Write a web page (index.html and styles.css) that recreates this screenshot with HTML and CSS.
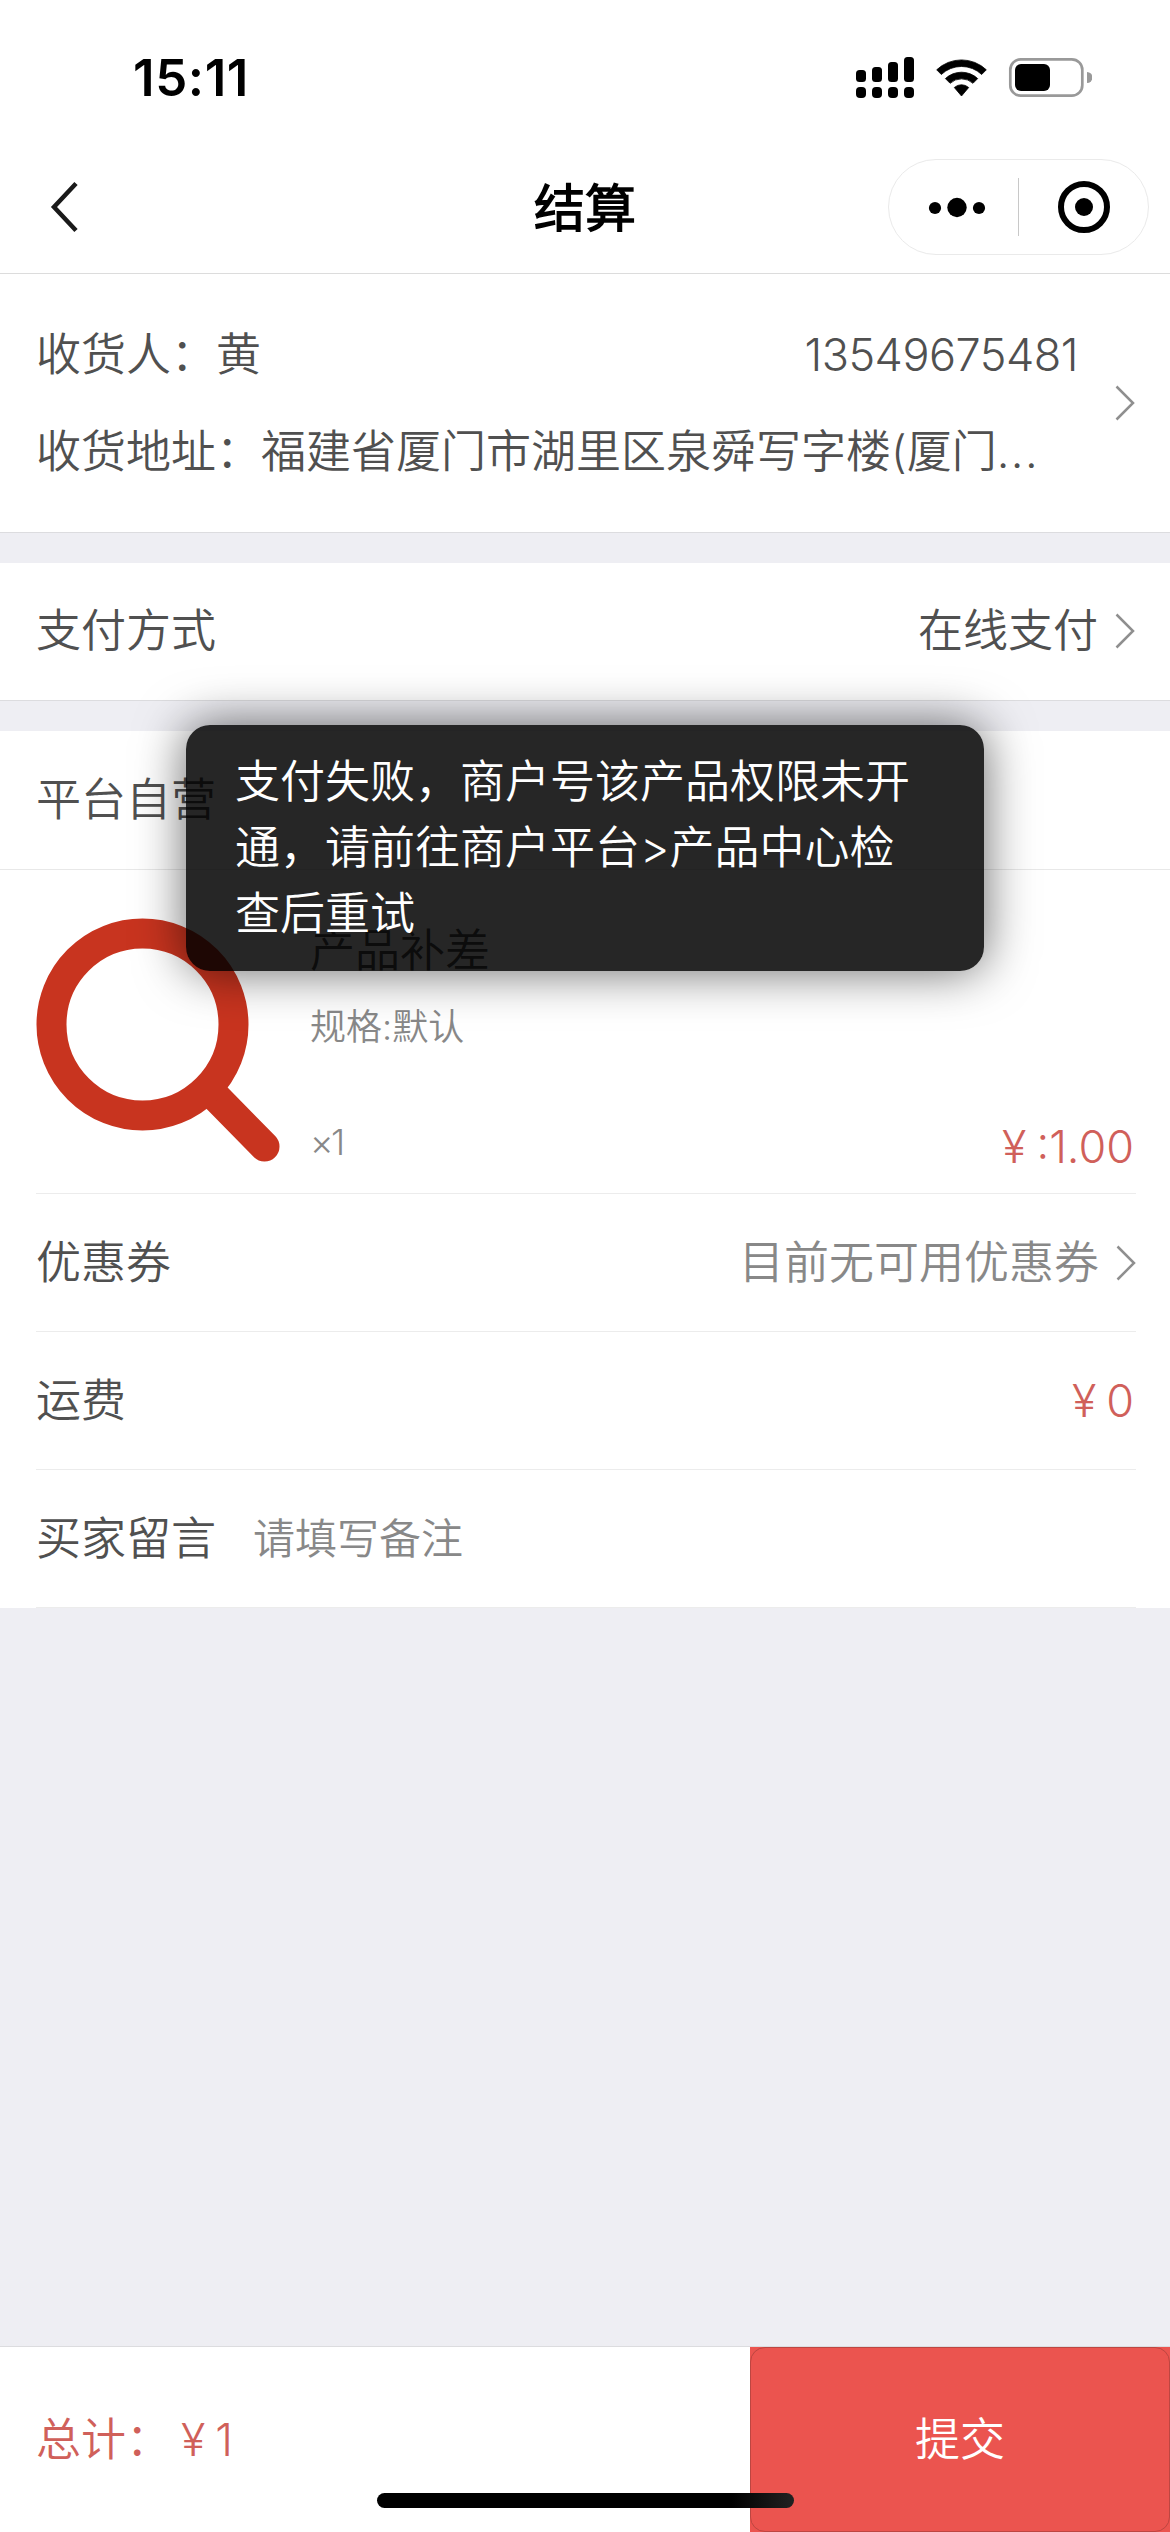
FILE: index.html
```html
<!DOCTYPE html>
<html lang="zh-CN">
<head>
<meta charset="utf-8">
<title>结算</title>
<link rel="stylesheet" href="styles.css">
</head>
<body>
<div class="page">
  <header class="top">
    <div class="status">
      <span class="clock">15:11</span>
      <svg class="status-icons" width="236" height="44" viewBox="0 0 236 44">
        <g>
          <rect x="0" y="15" width="10" height="12" rx="3.5"/>
          <rect x="16" y="12" width="10" height="15" rx="3.5"/>
          <rect x="32" y="7" width="10" height="20" rx="3.5"/>
          <rect x="48" y="2" width="10" height="25" rx="3.5"/>
          <rect x="0" y="32" width="10" height="11" rx="4"/>
          <rect x="16" y="32" width="10" height="11" rx="4"/>
          <rect x="32" y="32" width="10" height="11" rx="4"/>
          <rect x="48" y="32" width="10" height="11" rx="4"/>
        </g>
        <path d="M80.7 14.8a36 36 0 0 1 49.6 0l-4.6 4.7a29.4 29.4 0 0 0-40.4 0z M89.4 23.6a23.6 23.6 0 0 1 32.3 0l-4.7 4.7a17 17 0 0 0-22.9 0z M98.3 32.5a10.8 10.8 0 0 1 14.4 0l-7.2 8.5z" stroke="#000" stroke-width="0.8" stroke-linejoin="round"/>
        <rect x="154.3" y="4.3" width="72" height="36.4" rx="10.5" fill="none" stroke="#999" stroke-width="2.7"/>
        <rect x="159" y="9" width="35" height="27" rx="6"/>
        <path d="M231 17a5.5 5.5 0 0 1 0 11z" fill="#999"/>
      </svg>
    </div>
    <div class="nav">
      <svg class="back" width="30" height="54" viewBox="0 0 30 54"><path d="M27 3.5 5 27l22 23.5"/></svg>
      <h1 class="title">结算</h1>
      <div class="capsule">
        <svg width="259" height="94" viewBox="0 0 259 94">
          <circle cx="46" cy="48" r="6.1"/>
          <circle cx="68" cy="47.5" r="9.7"/>
          <circle cx="90" cy="48" r="6.1"/>
          <path d="M129.5 18v58" stroke="#c8c8c8" stroke-width="1"/>
          <circle cx="195" cy="47" r="23" fill="none" stroke="#000" stroke-width="6"/>
          <circle cx="195" cy="47" r="9"/>
        </svg>
      </div>
    </div>
  </header>

  <main class="content">
    <section class="card address">
      <div class="address-body">
        <div class="address-line"><span>收货人：黄</span><span class="phone">13549675481</span></div>
        <div class="address-line"><span>收货地址：福建省厦门市湖里区泉舜写字楼(厦门<span class="dots">...</span></span></div>
      </div>
      <svg class="chevron" width="20" height="36" viewBox="0 0 20 36"><path d="M1.5 1.5 18 18 1.5 34.5"/></svg>
    </section>

    <section class="card row payment">
      <span>支付方式</span>
      <span class="row-value">在线支付<svg class="chevron" width="20" height="36" viewBox="0 0 20 36"><path d="M1.5 1.5 18 18 1.5 34.5"/></svg></span>
    </section>

    <section class="order">
      <div class="row shop">平台自营</div>
      <div class="product">
        <svg class="thumb" width="244" height="244" viewBox="0 0 244 244">
          <path d="M175 174 228.5 228.5"/>
          <circle cx="106.5" cy="106.5" r="91"/>
        </svg>
        <div class="product-info">
          <div class="product-name">产品补差</div>
          <div class="product-spec">规格:默认</div>
          <div class="product-foot"><span class="qty">×1</span><span class="price"><span class="yen">¥</span>:1.00</span></div>
        </div>
      </div>
      <div class="lines">
        <div class="line"><span>优惠券</span><span class="row-value muted">目前无可用优惠券<svg class="chevron" width="20" height="36" viewBox="0 0 20 36"><path d="M1.5 1.5 18 18 1.5 34.5"/></svg></span></div>
        <div class="line"><span>运费</span><span class="price"><span class="yen">¥</span>0</span></div>
        <div class="line note"><span>买家留言</span><span class="placeholder">请填写备注</span></div>
      </div>
    </section>
  </main>

  <footer class="bottom">
    <div class="total"><span class="total-label">总计：</span><span class="yen">¥</span>1</div>
    <div class="submit"><button class="submit-button" type="button">提交</button></div>
  </footer>

  <div class="toast">支付失败，商户号该产品权限未开<br>通，请前往商户平台&gt;产品中心检<br>查后重试</div>
  <div class="home-indicator"></div>
</div>
</body>
</html>
```
FILE: styles.css
```css
* {
  box-sizing: border-box;
}

body {
  margin: 0;
  background: #eeeef3;
  color: #505050;
  font: 350 45px/60px Inter, "Noto Sans CJK SC DemiLight", "Noto Sans CJK SC", sans-serif;
}

.page {
  position: relative;
  display: flex;
  flex-direction: column;
  width: 1170px;
  height: 2532px;
  overflow: hidden;
}

/* status bar and navigation */
.top {
  height: 274px;
  background: #fff;
  border-bottom: 1px solid #dcdcdc;
}

.status {
  display: flex;
  justify-content: space-between;
  align-items: flex-start;
  height: 159px;
  padding: 48px 78px 0 133px;
}

.clock {
  color: #000;
  font-size: 51px;
  font-weight: 600;
  letter-spacing: 0.6px;
}

.status-icons {
  margin-top: 7px;
}

.nav {
  display: grid;
  grid-template-columns: 261px 1fr 261px;
  align-items: center;
  height: 96px;
  padding: 0 21px;
}

.back {
  margin-left: 28px;
}

.back path {
  fill: none;
  stroke: #1a1a1a;
  stroke-width: 4.5;
}

.title {
  margin: 0;
  padding-top: 4px;
  color: #000;
  font-size: 51px;
  font-weight: 700;
  text-align: center;
}

.capsule {
  width: 261px;
  height: 96px;
  border: 1px solid #eaeaea;
  border-radius: 48px;
}

.capsule svg {
  display: block;
}

/* cards */
.content {
  flex: 1;
}

.card {
  background: #fff;
  border-bottom: 1px solid #dcdcdf;
  margin-bottom: 30px;
}

.address {
  display: flex;
  align-items: center;
  height: 259px;
  padding: 0 35px 0 36px;
}

.address-body {
  display: flex;
  flex: 1;
  flex-direction: column;
  gap: 37px;
  padding-right: 37px;
}

.address-line {
  display: flex;
  justify-content: space-between;
  white-space: nowrap;
}

.phone {
  letter-spacing: -0.5px;
}

.dots {
  letter-spacing: 1.5px;
}

.chevron {
  flex: none;
}

.chevron path {
  fill: none;
  stroke: #8f8f8f;
  stroke-width: 2.5;
}

.row {
  display: flex;
  justify-content: space-between;
  align-items: center;
  height: 138px;
  padding: 0 35px 0 36px;
}

.payment {
  padding-bottom: 2px;
}

.row-value {
  display: flex;
  align-items: center;
  gap: 17px;
}

.order {
  height: 877px;
  background: #fff;
}

.shop {
  height: 139px;
  border-bottom: 1px solid #e8e8e8;
}

.product {
  display: flex;
  gap: 30px;
  height: 324px;
  margin: 0 34px 0 36px;
  padding-top: 48px;
  border-bottom: 1px solid #ececec;
}

.thumb path,
.thumb circle {
  fill: none;
  stroke: #c8341f;
  stroke-width: 30;
  stroke-linecap: round;
}

.product-info {
  flex: 1;
}

.product-name {
  padding-top: 2px;
  line-height: 62px;
}

.product-spec {
  margin-top: 20px;
  color: #888;
  font-size: 36px;
  line-height: 50px;
}

.product-foot {
  display: flex;
  justify-content: space-between;
  margin-top: 65px;
}

.qty {
  color: #888;
  font-size: 36px;
  line-height: 50px;
  letter-spacing: -2.5px;
}

.price,
.total {
  color: #d0605a;
}

.price {
  padding-right: 2px;
}

.yen {
  margin-right: 10px;
}

.lines {
  margin: 0 34px 0 36px;
}

.line {
  display: flex;
  justify-content: space-between;
  align-items: center;
  height: 138px;
  border-bottom: 1px solid #ececec;
}

.muted,
.placeholder {
  color: #888;
}

.note {
  justify-content: flex-start;
  gap: 37px;
}

.placeholder {
  font-size: 42px;
}

/* bottom bar */
.bottom {
  display: flex;
  justify-content: space-between;
  height: 186px;
  background: #fff;
  border-top: 1px solid #dcdcdf;
}

.total {
  align-self: center;
  padding-left: 36px;
}

.total-label {
  margin-right: 10px;
}

.submit {
  width: 420px;
  background: #eb544f;
}

.submit-button {
  width: 100%;
  height: 100%;
  border: 1px solid #bd4641;
  border-radius: 15px;
  background: #eb544f;
  color: #fff;
  font: inherit;
}

/* overlays */
.toast {
  position: absolute;
  top: 725px;
  left: 186px;
  width: 798px;
  height: 246px;
  padding: 24px 49px;
  border-radius: 24px;
  background: rgba(0, 0, 0, 0.85);
  box-shadow: 0 0 50px rgba(0, 0, 0, 0.6);
  color: #fff;
  line-height: 66px;
  white-space: nowrap;
}

.home-indicator {
  position: absolute;
  top: 2493px;
  left: 377px;
  width: 417px;
  height: 15px;
  border-radius: 8px;
  background: linear-gradient(90deg, #000 85%, #222);
}
```
